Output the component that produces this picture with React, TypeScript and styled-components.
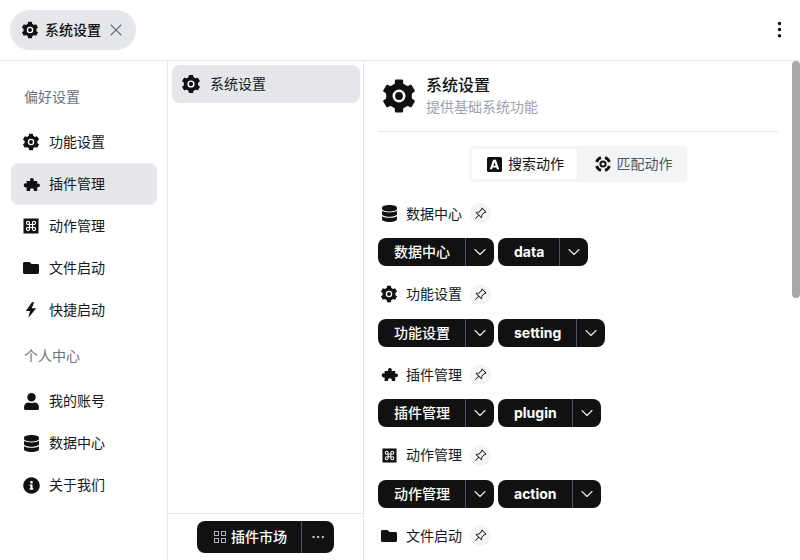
import React from "react";
import styled, { createGlobalStyle } from "styled-components";
import { ChevronDown, EllipsisVertical, Ellipsis, X } from "lucide-react";
import { FaDatabase, FaFolder, FaInfoCircle, FaUser } from "react-icons/fa";
import { BsPinAngle } from "react-icons/bs";

const Global = createGlobalStyle`
  html, body { margin: 0; padding: 0; height: 100%; }
  #root { height: 100%; }
  * { box-sizing: border-box; }
  body { font-family: Inter, "Noto Sans CJK SC", "Noto Sans", sans-serif; color: #111827; font-size: 14px; line-height: 20px; }
`;

const Shell = styled.div`
  width: 800px; height: 560px; display: flex; flex-direction: column; overflow: hidden; background: #fff;
`;
const TopBar = styled.header`
  height: 61px; flex: none; display: flex; align-items: center; justify-content: space-between;
  padding: 0 10px; border-bottom: 1px solid #e5e7eb;
`;
const Tab = styled.div`
  width: 126px; height: 40px; border-radius: 20px; background: #e5e7eb;
  display: flex; align-items: center; padding-left: 12px; gap: 7px; font-weight: 500;
  color: #111;
`;
const CloseIcon = styled(X)`
  color: #6b7280; margin-left: -2px; flex: none;
`;
const MoreButton = styled.div`
  width: 21px; height: 21px; display: flex; color: #111; margin-bottom: 2px;
`;
const Body = styled.div`
  flex: 1; min-height: 0; display: flex;
`;
const Sidebar = styled.nav`
  width: 168px; flex: none; border-right: 1px solid #e5e7eb; padding: 15px 10px 0 11px;
  display: flex; flex-direction: column;
`;
const GroupLabel = styled.div<{ $gap?: number }>`
  height: 42px; line-height: 42px; padding-left: 13px; color: #6b7280; margin-bottom: 3px;
  margin-top: ${(p) => p.$gap ?? 0}px;
`;
const NavItem = styled.div<{ $active?: boolean }>`
  height: 42px; border-radius: 8px; display: flex; align-items: center; gap: 10px;
  padding-left: 12px; background: ${(p) => (p.$active ? "#e5e7eb" : "transparent")};
`;
const IconSlot = styled.span<{ $size?: number }>`
  width: ${(p) => p.$size ?? 16}px; height: ${(p) => p.$size ?? 16}px; flex: none;
  display: flex; align-items: center; justify-content: center; color: #111;
  svg { flex: none; }
`;
const MiddleColumn = styled.aside`
  width: 196px; flex: none; border-right: 1px solid #e5e7eb; display: flex; flex-direction: column;
`;
const MiddleList = styled.div`
  flex: 1; padding: 4px 3px 0 4px;
`;
const MiddleItem = styled.div`
  height: 38px; border-radius: 8px; background: #e5e7eb; display: flex; align-items: center;
  gap: 10px; padding-left: 10px;
`;
const MiddleFooter = styled.div`
  height: 47px; flex: none; border-top: 1px solid #e5e7eb; display: flex; justify-content: center;
  padding-top: 7px;
`;
const MarketButton = styled.div`
  width: 137px; height: 32px; background: #111; color: #fff; border-radius: 8px; display: flex;
  align-items: center; font-weight: 500;
`;
const MarketMain = styled.div`
  width: 105px; height: 100%; display: flex; align-items: center; padding-left: 17px; gap: 5px;
  border-right: 1px solid #4b5563;
`;
const MarketMore = styled.div`
  flex: 1; display: flex; justify-content: center; color: #e5e7eb;
`;
const ContentWrap = styled.div`
  position: relative; flex: 1; min-width: 0; overflow: hidden;
`;
const Content = styled.main`
  padding: 14px 22px 0 14px;
`;
const ScrollThumb = styled.div`
  position: absolute; top: 0; right: 0; width: 8px; height: 237px; background: #a8a8a8; border-radius: 4px;
`;
const Hero = styled.div`
  display: flex; align-items: center; gap: 9px; padding: 0 0 14px 3px; height: 57px;
  border-bottom: 1px solid #e5e7eb;
`;
const HeroText = styled.div`
  display: flex; flex-direction: column;
`;
const HeroTitle = styled.div`
  font-size: 16px; line-height: 22px; font-weight: 500; color: #111;
`;
const HeroSub = styled.div`
  font-size: 14px; line-height: 22px; color: #9ca3af;
`;
const SegmentRow = styled.div`
  display: flex; justify-content: center; margin-top: 14px;
`;
const Segments = styled.div`
  width: 218px; height: 36px; background: #f3f4f6; border-radius: 4px; padding: 3px; display: flex;
`;
const Segment = styled.div<{ $active?: boolean }>`
  height: 30px; width: ${(p) => (p.$active ? 105 : 107)}px; background: ${(p) => (p.$active ? "#fff" : "transparent")};
  border-radius: 3px; display: flex; align-items: center; justify-content: center;
  gap: ${(p) => (p.$active ? 6 : 5)}px; padding-left: ${(p) => (p.$active ? 2 : 5)}px;
  color: ${(p) => (p.$active ? "#111" : "#4b5563")};
`;
const SectionList = styled.div`
  margin-top: 21px; display: flex; flex-direction: column; gap: 17.5px;
`;
const Section = styled.section`
  display: flex; flex-direction: column; gap: 14px;
`;
const SectionHead = styled.div`
  height: 21px; display: flex; align-items: center; gap: 9px; padding-left: 3px;
`;
const PinBadge = styled.span`
  width: 21px; height: 21px; border-radius: 50%; background: #f3f4f6; display: flex; align-items: center;
  justify-content: center; margin-left: -1px; color: #111;
`;
const ButtonRow = styled.div`
  display: flex; gap: 4px;
`;
const SplitButton = styled.div`
  height: 28px; background: #111; color: #fff; border-radius: 8px; display: flex; align-items: center;
`;
const SplitMain = styled.div<{ $bold?: boolean }>`
  height: 100%; display: flex; align-items: center; padding: 0 15px 0 16px; border-right: 1px solid #4b5563;
  font-weight: ${(p) => (p.$bold ? 700 : 500)};
`;
const SplitCaret = styled.div`
  width: 28px; display: flex; align-items: center; justify-content: center; color: #e5e7eb;
`;

const gearPath = (() => {
  const pts: string[] = [];
  const polar = (deg: number, r: number) => {
    const a = (deg * Math.PI) / 180;
    return `${(18 + r * Math.cos(a)).toFixed(2)} ${(18 + r * Math.sin(a)).toFixed(2)}`;
  };
  for (let k = 0; k < 6; k++) {
    const c = -90 + 60 * k;
    pts.push(polar(c - 30, 11.6), polar(c - 15, 12.4), polar(c - 11, 15.6), polar(c + 11, 15.6), polar(c + 15, 12.4));
  }
  return "M" + pts.join("L") + "Z";
})();

const Gear = ({ size = 18 }: { size?: number }) => (
  <svg width={size} height={size} viewBox="0 0 36 36">
    <path d={gearPath} fill="#111" stroke="#111" strokeWidth="2.2" strokeLinejoin="round" />
    <circle cx="18" cy="18" r="5.2" fill="none" stroke="#fff" strokeWidth="2.6" />
  </svg>
);
const Puzzle = ({ size = 17 }: { size?: number }) => (
  <svg width={size} height={size} viewBox="0 0 16 16">
    <path d="M3.4 4.8H6.8L6.6 3.6A1.8 1.8 0 1 1 10.2 3.6L10 4.8H13.4V7.2L14.2 7A1.7 1.7 0 1 1 14.2 10.6L13.4 10.4V14H10.2L10.3 13.4A1.9 1.9 0 1 0 6.5 13.4L6.6 14H3.4V10.6L2.6 10.8A2 2 0 1 1 2.6 6.8L3.4 7Z" fill="#111" />
  </svg>
);
const Bolt = () => (
  <svg width="16" height="16" viewBox="0 0 16 16">
    <path d="M9 0.2L2.8 9H7L5.4 15.8L13.2 6.2H8.7L11.2 0.2Z" fill="#111" />
  </svg>
);
const CommandIcon = ({ size = 16 }: { size?: number }) => (
  <svg width={size} height={size} viewBox="0 0 16 16">
    <rect x="0.5" y="0.5" width="15" height="15" fill="#111" />
    <g fill="none" stroke="#fff" strokeWidth="1.1">
      <rect x="6.5" y="6.5" width="3" height="3" />
      <circle cx="5" cy="5" r="1.6" />
      <circle cx="11" cy="5" r="1.6" />
      <circle cx="5" cy="11" r="1.6" />
      <circle cx="11" cy="11" r="1.6" />
    </g>
  </svg>
);
const GridIcon = () => (
  <svg width="12" height="12" viewBox="0 0 12 12" fill="none" stroke="#b0b4ba" strokeWidth="1">
    <rect x="0.5" y="0.5" width="4" height="4" />
    <rect x="7.5" y="0.5" width="4" height="4" />
    <rect x="0.5" y="7.5" width="4" height="4" />
    <rect x="7.5" y="7.5" width="4" height="4" />
  </svg>
);
const SearchIcon = () => (
  <svg width="15" height="15" viewBox="0 0 15 15">
    <rect width="15" height="15" rx="1.5" fill="#111" />
    <path fillRule="evenodd" d="M6.1 2.8H8.9L12.2 12.2H9.9L9.3 10.4H5.7L5.1 12.2H2.8ZM7.5 5.3L6.3 8.7H8.7Z" fill="#fff" />
  </svg>
);
const MatchIcon = () => (
  <svg width="18" height="18" viewBox="0 0 18 18">
    <path d="M2.6 7A6.7 6.7 0 0 1 7 2.6M11 2.6A6.7 6.7 0 0 1 15.4 7M15.4 11A6.7 6.7 0 0 1 11 15.4M7 15.4A6.7 6.7 0 0 1 2.6 11" fill="none" stroke="#111" strokeWidth="2.8" />
    <circle cx="9" cy="9" r="2.6" fill="none" stroke="#111" strokeWidth="2" />
  </svg>
);

type Entry = { icon: React.ReactNode; label: string; key: string };

const entries: Entry[] = [
  { icon: <FaDatabase size={17} />, label: "数据中心", key: "data" },
  { icon: <Gear />, label: "功能设置", key: "setting" },
  { icon: <Puzzle />, label: "插件管理", key: "plugin" },
  { icon: <CommandIcon size={15} />, label: "动作管理", key: "action" },
  { icon: <FaFolder size={16} />, label: "文件启动", key: "file" },
];

export default function App() {
  return (
    <Shell>
      <Global />
      <TopBar>
        <Tab>
          <IconSlot><Gear /></IconSlot>
          系统设置
          <CloseIcon size={20} strokeWidth={1.4} />
        </Tab>
        <MoreButton><EllipsisVertical size={21} /></MoreButton>
      </TopBar>
      <Body>
        <Sidebar>
          <GroupLabel>偏好设置</GroupLabel>
          <NavItem><IconSlot><Gear /></IconSlot>功能设置</NavItem>
          <NavItem $active><IconSlot><Puzzle /></IconSlot>插件管理</NavItem>
          <NavItem><IconSlot><CommandIcon /></IconSlot>动作管理</NavItem>
          <NavItem><IconSlot><FaFolder size={16} /></IconSlot>文件启动</NavItem>
          <NavItem><IconSlot><Bolt /></IconSlot>快捷启动</NavItem>
          <GroupLabel $gap={4}>个人中心</GroupLabel>
          <NavItem><IconSlot><FaUser size={17} /></IconSlot>我的账号</NavItem>
          <NavItem><IconSlot><FaDatabase size={17} /></IconSlot>数据中心</NavItem>
          <NavItem><IconSlot><FaInfoCircle size={17} /></IconSlot>关于我们</NavItem>
        </Sidebar>
        <MiddleColumn>
          <MiddleList>
            <MiddleItem><IconSlot $size={18}><Gear size={20} /></IconSlot>系统设置</MiddleItem>
          </MiddleList>
          <MiddleFooter>
            <MarketButton>
              <MarketMain><GridIcon />插件市场</MarketMain>
              <MarketMore><Ellipsis size={16} strokeWidth={1.5} /></MarketMore>
            </MarketButton>
          </MiddleFooter>
        </MiddleColumn>
        <ContentWrap>
          <Content>
            <Hero>
              <IconSlot $size={36}><Gear size={36} /></IconSlot>
              <HeroText>
                <HeroTitle>系统设置</HeroTitle>
                <HeroSub>提供基础系统功能</HeroSub>
              </HeroText>
            </Hero>
            <SegmentRow>
              <Segments>
                <Segment $active><SearchIcon />搜索动作</Segment>
                <Segment><MatchIcon />匹配动作</Segment>
              </Segments>
            </SegmentRow>
            <SectionList>
              {entries.map((e) => (
                <Section key={e.key}>
                  <SectionHead>
                    <IconSlot>{e.icon}</IconSlot>
                    {e.label}
                    <PinBadge><BsPinAngle size={13} /></PinBadge>
                  </SectionHead>
                  <ButtonRow>
                    <SplitButton>
                      <SplitMain>{e.label}</SplitMain>
                      <SplitCaret><ChevronDown size={20} strokeWidth={1.4} /></SplitCaret>
                    </SplitButton>
                    <SplitButton>
                      <SplitMain $bold>{e.key}</SplitMain>
                      <SplitCaret><ChevronDown size={20} strokeWidth={1.4} /></SplitCaret>
                    </SplitButton>
                  </ButtonRow>
                </Section>
              ))}
            </SectionList>
          </Content>
          <ScrollThumb />
        </ContentWrap>
      </Body>
    </Shell>
  );
}
